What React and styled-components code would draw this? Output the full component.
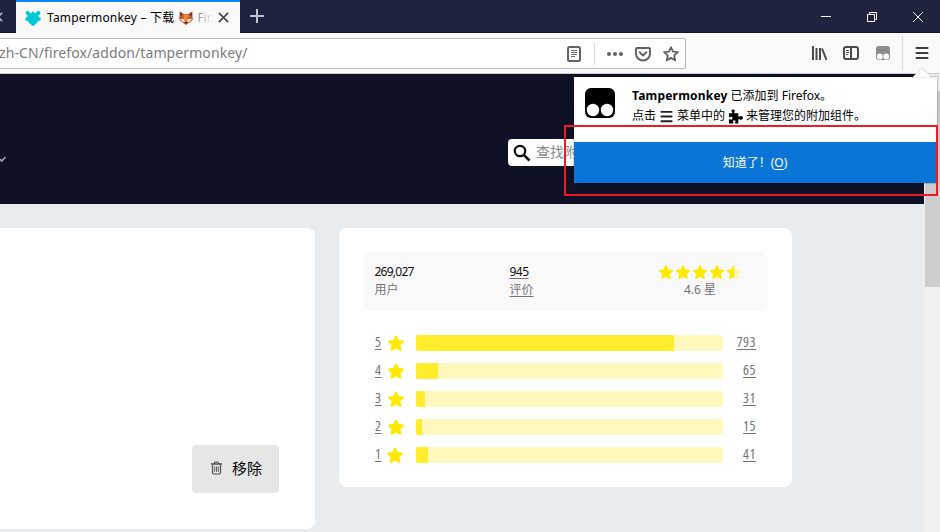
import React from "react";
import styled, { createGlobalStyle } from "styled-components";

const Global = createGlobalStyle`
  * { box-sizing: border-box; }
  html, body { margin: 0; padding: 0; overflow: hidden; }
  body { font-family: "Noto Sans", "Noto Sans CJK SC", sans-serif; font-size: 12px; color: #000; }
  svg { display: block; flex: none; }
`;

const Window = styled.div`
  position: relative;
  width: 940px;
  height: 532px;
  overflow: hidden;
  display: flex;
  flex-direction: column;
  background: #e8ecef;
`;

const Label = styled.span`
  font-size: ${(p) => p.$size || 12}px;
  line-height: 18px;
  font-weight: ${(p) => p.$weight || 400};
  letter-spacing: ${(p) => p.$track || 0}px;
  color: ${(p) => p.$color || "inherit"};
  white-space: nowrap;
`;

/* Title bar */
const TitleBar = styled.header`
  height: 33px;
  flex: none;
  display: flex;
  background: #202340;
  box-shadow: inset 0 -1px 0 #141629;
`;
const PreviousTab = styled.div`
  width: 16px;
  padding-top: 12px;
  overflow: hidden;
  svg { margin-left: -7px; }
`;
const Tab = styled.div`
  width: 224px;
  height: 33px;
  display: flex;
  align-items: center;
  background: #f9f9fa;
  border-top: 2px solid #0a84ff;
  padding: 0 11px 0 9px;
`;
const TabTitle = styled.div`
  display: flex;
  align-items: center;
  width: 165px;
  margin: 0 6px;
  overflow: hidden;
  white-space: nowrap;
  svg { margin: 0 4px 0 5px; }
`;
const Faded = styled(Label)`
  background: linear-gradient(90deg, #888, #e8e8e8 15px);
  -webkit-background-clip: text;
  background-clip: text;
  color: transparent;
`;
const NewTab = styled.div`
  padding: 9px 0 0 10px;
  flex: 1;
`;
const WindowButtons = styled.div`
  display: flex;
  svg { width: 46px; height: 32px; }
`;

/* Navigation toolbar */
const Toolbar = styled.nav`
  height: 41px;
  flex: none;
  display: flex;
  background: #f9f9fa;
  border-bottom: 1px solid #ccc;
`;
const UrlBar = styled.div`
  width: 687px;
  height: 31px;
  margin: 5px 0 0 -1px;
  display: flex;
  align-items: center;
  border: 1px solid #b9b9ba;
  border-radius: 0 2px 2px 0;
  background: #fff;
`;
const UrlText = styled(Label)`
  width: 567px;
  margin-left: -1px;
  color: #7b7b7b;
  line-height: 24px;
  padding-bottom: 2px;
`;
const UrlDivider = styled.i`
  width: 1px;
  height: 22px;
  margin: 0 12px;
  background: #d7d7db;
`;
const UrlActions = styled.div`
  display: flex;
  gap: 12px;
`;
const ToolIcons = styled.div`
  display: flex;
  gap: 16px;
  padding: 12px 11px 0 125px;
`;
const MenuButton = styled.div`
  height: 34px;
  margin-top: 3px;
  padding: 9px 0 0 11px;
  border-left: 1px solid #d7d7db;
`;

/* Page */
const Viewport = styled.div`
  display: flex;
  flex: 1;
`;
const Page = styled.main`
  width: 924px;
`;
const Hero = styled.section`
  height: 130px;
  display: flex;
  align-items: flex-start;
  background: #0f1126;
  padding-top: 65px;
`;
const HeroChevron = styled.div`
  width: 508px;
  padding-top: 17px;
`;
const Search = styled.div`
  width: 280px;
  height: 27px;
  display: flex;
  align-items: center;
  gap: 5px;
  padding-left: 5px;
  background: #fff;
  border-radius: 4px;
  span { margin-bottom: 2px; }
`;
const Cards = styled.div`
  display: flex;
  align-items: flex-start;
  gap: 24px;
  padding-top: 24px;
`;
const SummaryCard = styled.section`
  width: 315px;
  height: 301px;
  display: flex;
  align-items: flex-end;
  justify-content: flex-end;
  padding: 36px;
  background: #fff;
  border-radius: 0 8px 8px 0;
`;
const RemoveButton = styled.div`
  width: 87px;
  height: 48px;
  display: flex;
  align-items: center;
  padding: 0 0 2px 18px;
  gap: 9px;
  background: #e6e6e6;
  border-radius: 4px;
`;
const RatingCard = styled.section`
  width: 453px;
  height: 259px;
  padding: 24px;
  background: #fff;
  border-radius: 8px;
`;
const Stats = styled.div`
  height: 59px;
  display: grid;
  grid-template-columns: 135px 135px 111px;
  padding: 11px 11.5px;
  background: #f9f9fa;
  border-radius: 8px;
`;
const Stat = styled.div`
  display: flex;
  flex-direction: column;
  align-items: ${(p) => (p.$center ? "center" : "flex-start")};
  text-decoration: ${(p) => (p.$link ? "underline" : "none")};
  text-underline-offset: 2px;
  color: #737373;
`;
const Stars = styled.div`
  height: 18px;
  display: flex;
  align-items: center;
  gap: 3px;
`;
const Histogram = styled.div`
  display: flex;
  flex-direction: column;
  gap: 12px;
  padding: 24px 12px;
`;
const HistogramRow = styled.div`
  display: flex;
  align-items: center;
  height: 16px;
  color: #737373;
  text-decoration: underline;
  text-underline-offset: 2px;
`;
const Digits = styled.span`
  font-family: "Open Sans", "Noto Sans", sans-serif;
  font-size: 14px;
  font-stretch: 75%;
  line-height: 16px;
  letter-spacing: 0.5px;
  margin-bottom: 2px;
`;
const Score = styled.div`
  display: flex;
  align-items: center;
  gap: ${(p) => (p.$narrow ? 4 : 5)}px;
  width: 41px;
  span { width: 8px; }
`;
const Track = styled.div`
  width: 307px;
  height: 16px;
  background: #fff8bd;
  border-radius: 2px;
  overflow: hidden;
`;
const Fill = styled.div`
  height: 16px;
  background: #ffed2d;
`;
const Count = styled.div`
  display: flex;
  justify-content: flex-end;
  width: 33px;
`;
const Scrollbar = styled.aside`
  width: 16px;
  padding: 17px 0 0 1px;
  background: #f0f0f0;
`;
const Thumb = styled.div`
  height: 196px;
  background: #cdcdcd;
`;

/* Notification */
const Popup = styled.div`
  position: absolute;
  left: 574px;
  top: 77px;
  width: 363px;
  height: 106px;
  background: #fff;
  box-shadow: 0 0 1px 1px rgba(0, 0, 0, 0.16);
`;
const Arrow = styled.svg`
  position: absolute;
  left: 338px;
  top: -10px;
`;
const Notice = styled.div`
  height: 65px;
  display: flex;
  gap: 17px;
  padding: 10px 11px;
  > svg { margin-top: 1px; }
`;
const NoticeLines = styled.div`
  display: flex;
  flex-direction: column;
  gap: 2px;
`;
const NoticeLine = styled.div`
  height: 18px;
  display: flex;
  align-items: center;
  gap: 3px;
`;
const Confirm = styled.div`
  height: 41px;
  display: flex;
  align-items: center;
  justify-content: center;
  padding-right: 1px;
  background: #0a75d7;
  color: #fff;
  u { text-underline-offset: 2px; }
`;
const Highlight = styled.div`
  position: absolute;
  left: 564px;
  top: 125px;
  width: 374px;
  height: 71px;
  border: 2px solid #ed1c24;
`;

const STAR = "M8 .4c.5 0 .8.3 1 .8l1.700 3.900 4.300.4c1 .1 1.300 1.100.6 1.800l-3.200 2.900 1 4.300c.2 1-.7 1.700-1.600 1.200L8 13.500l-3.800 2.200c-.9.500-1.800-.2-1.600-1.200l1-4.300L.4 7.300c-.7-.7-.4-1.700.6-1.800l4.300-.4L7 1.200c.2-.5.5-.8 1-.8z";

function Star({ size = 16, half }) {
  return (
    <svg width={size} height={size} viewBox="0 0 16 16">
      <path d={STAR} fill={half ? "#fff5a3" : "#ffe900"} />
      {half && <path d={STAR} fill="#ffe900" style={{ clipPath: "inset(0 50% 0 0)" }} />}
    </svg>
  );
}

function Cross({ size, color, width }) {
  return (
    <svg width={size} height={size} viewBox="0 0 10 10">
      <path d="M.8.8l8.400 8.400M9.200.8L.8 9.200" stroke={color} strokeWidth={width} />
    </svg>
  );
}

const PUZZLE = "M4.500 4V3C3 1.600 3.800 0 5.500 0s2.500 1.600 1.200 3v1H11v3.500h1.300C13.800 6.200 16 7 16 8.900s-2.200 2.700-3.700 1.400H11V15H7.600v-1.200c1-1.200.3-2.300-.9-2.300s-1.900 1.100-.9 2.300V15H1v-4.500h1.300c1.500 1 2.400.1 2.400-1.100S3.800 7.300 2.300 8.300H1V4z";

function AddonsIcon() {
  return (
    <svg width="16" height="16" viewBox="0 0 16 16" fill="#00c8d7">
      <circle cx="2.600" cy="3" r="2" />
      <circle cx="13.400" cy="3" r="2" />
      <circle cx="1.800" cy="9" r="1.700" />
      <circle cx="14.200" cy="9" r="1.700" />
      <circle cx="8" cy="14" r="2" />
      <path d="M3 1.500l3 1.700C6.800 3.700 7 2.700 6.600 1.800h2.800C9 2.700 9.200 3.700 10 3.200l3-1.700.8 6 .4 3.300-1.200.4-1.400 2.300L8 14.500l-3.600-1L3 11.200l-1.200-.4.4-3.300z" />
    </svg>
  );
}

function Fox() {
  return (
    <svg width="14" height="14" viewBox="0 0 14 14">
      <path d="M.7.2l4 2.800h4.600L13.300.2l.2 5.500.3 3-3.300 2.800L7 14l-3.500-2.500L.2 8.700l.3-3z" fill="#c4552b" />
      <path d="M1.300 1.500l2.200 1.800-1.900 2.300zM12.700 1.500l-2.200 1.800 1.900 2.300z" fill="#493039" />
      <path d="M5 3.500h4l1.700 4.300L8 10H6L3.300 7.800z" fill="#f58435" />
      <path d="M1 8l3.600-.3L6.200 11 4 11zM13 8l-3.600-.3L7.800 11l2.200 0z" fill="#f4e9df" />
      <path d="M4 6.200l1.700 1-1.400.3zM10 6.200l-1.700 1 1.400.3zM5.800 11h2.400L7 13z" fill="#211d28" />
    </svg>
  );
}

function Burger({ size = 16, color = "#3e3e3f" }) {
  return (
    <svg width={size} height={size} viewBox="0 0 16 16">
      <path d="M2.500 3h11M2.500 8h11M2.500 13h11" stroke={color} strokeWidth="2" strokeLinecap="round" />
    </svg>
  );
}

function TamperIcon({ size, color }) {
  return (
    <svg width={size} height={size} viewBox="0 0 30 30">
      <rect width="30" height="30" rx="6" fill={color} />
      <circle cx="8" cy="22" r="6.200" fill="#fff" />
      <circle cx="22" cy="22" r="6.200" fill="#fff" />
    </svg>
  );
}

function ReaderIcon() {
  return (
    <svg width="16" height="16" viewBox="0 0 16 16" fill="none" stroke="#636364">
      <rect x="2" y="1" width="12" height="14" rx="1.500" strokeWidth="2" />
      <path d="M5 4.500h6M5 6.500h6M5 8.500h6M5 10.500h4" />
    </svg>
  );
}

function PocketIcon() {
  return (
    <svg width="16" height="16" viewBox="0 0 16 16" fill="none" stroke="#636364" strokeWidth="2" strokeLinecap="round" strokeLinejoin="round">
      <path d="M2 2h12a1 1 0 0 1 1 1v4.500a7 7 0 0 1-14 0V3a1 1 0 0 1 1-1z" />
      <path d="M4.700 6.300L8 9.400l3.300-3.100" />
    </svg>
  );
}

function TrashIcon() {
  return (
    <svg width="13" height="14" viewBox="0 0 13 14" fill="none" stroke="#4f4f50">
      <path d="M1 3h11" strokeWidth="1.500" />
      <path d="M4.500 3V2q0-1 1-1h2q1 0 1 1v1M2.500 4v7.500q0 1.500 1.500 1.500h5q1.500 0 1.500-1.500V4" strokeWidth="1.200" />
      <path d="M4.700 5.500v5.300M6.500 5.500v5.300M8.300 5.500v5.300" strokeWidth=".9" />
    </svg>
  );
}

const ROWS = [
  { score: 5, count: 793, fill: 258 },
  { score: 4, count: 65, fill: 22 },
  { score: 3, count: 31, fill: 9 },
  { score: 2, count: 15, fill: 6 },
  { score: 1, count: 41, fill: 12 },
];

export default function App() {
  return (
    <Window>
      <Global />
      <TitleBar>
        <PreviousTab><Cross size={10} color="#b5b6c0" width={1.6} /></PreviousTab>
        <Tab>
          <AddonsIcon />
          <TabTitle>
            <Label $track={0.2}>Tampermonkey – 下载</Label>
            <Fox />
            <Faded>Fir</Faded>
          </TabTitle>
          <Cross size={11} color="#4a4a4b" width={1.6} />
        </Tab>
        <NewTab>
          <svg width="14" height="14"><path d="M7 0v14M0 7h14" stroke="#c2c2cb" strokeWidth="2" /></svg>
        </NewTab>
        <WindowButtons>
          <svg viewBox="0 0 46 32"><path d="M19 16.500h10" stroke="#fff" /></svg>
          <svg viewBox="0 0 46 32" fill="none" stroke="#fff"><path d="M19.500 14.500h7v7h-7zM21.500 14v-1.500h7v7H27" /></svg>
          <svg viewBox="0 0 46 32"><path d="M19 12l10 10M29 12L19 22" stroke="#fff" /></svg>
        </WindowButtons>
      </TitleBar>

      <Toolbar>
        <UrlBar>
          <UrlText $size={14} $track={0.1}>zh-CN/firefox/addon/tampermonkey/</UrlText>
          <ReaderIcon />
          <UrlDivider />
          <UrlActions>
            <svg width="16" height="16" fill="#636364"><circle cx="2" cy="8" r="2" /><circle cx="8" cy="8" r="2" /><circle cx="14" cy="8" r="2" /></svg>
            <PocketIcon />
            <svg width="16" height="16" viewBox="0 0 16 16" fill="none" stroke="#636364" strokeWidth="1.800" strokeLinejoin="round">
              <path d="M8 1.200l2 4.500 4.900.5-3.700 3.300 1.100 4.900L8 11.900l-4.300 2.500 1.100-4.900L1.100 6.200 6 5.700z" />
            </svg>
          </UrlActions>
        </UrlBar>
        <ToolIcons>
          <svg width="16" height="16" fill="none" stroke="#4a4a4b" strokeWidth="2"><path d="M2 1v14M5.500 3v12M9 3v12M11 3.500L15.500 15" /></svg>
          <svg width="16" height="16" fill="none" stroke="#4a4a4b" strokeWidth="2"><rect x="1" y="2" width="14" height="12" rx="2" /><path d="M8 2v12" /><path d="M3 5.500h3M3 7.500h3M3 9.500h2" strokeWidth="1" /></svg>
          <svg width="16" height="16" viewBox="0 0 16 16"><rect x="1" y="1" width="14" height="14" rx="3" fill="#8c8c8d" /><circle cx="4.800" cy="11.500" r="2.900" fill="#fff" /><circle cx="11.200" cy="11.500" r="2.900" fill="#fff" /></svg>
        </ToolIcons>
        <MenuButton><Burger /></MenuButton>
      </Toolbar>

      <Viewport>
        <Page>
          <Hero>
            <HeroChevron>
              <svg width="8" height="8" fill="none" stroke="#a0a1aa" strokeWidth="1.700"><path d="M-2 1.500L1.800 5 5.500 1" /></svg>
            </HeroChevron>
            <Search>
              <svg width="18" height="18" fill="none" stroke="#0c0c0d" strokeWidth="2.200"><circle cx="7" cy="7" r="5.200" /><path d="M10.800 10.800L16.500 16.500" strokeWidth="2.600" /></svg>
              <Label $size={14} $color="#8a8a8b">查找附加组件</Label>
            </Search>
          </Hero>
          <Cards>
            <SummaryCard>
              <RemoveButton><TrashIcon /><Label $size={15}>移除</Label></RemoveButton>
            </SummaryCard>
            <RatingCard>
              <Stats>
                <Stat><Label $color="#0c0c0d" $track={-0.75}>269,027</Label><Label>用户</Label></Stat>
                <Stat $link><Label $color="#0c0c0d" $track={-0.5}>945</Label><Label>评价</Label></Stat>
                <Stat $center>
                  <Stars><Star size={14} /><Star size={14} /><Star size={14} /><Star size={14} /><Star size={14} half /></Stars>
                  <Label>4.6 星</Label>
                </Stat>
              </Stats>
              <Histogram>
                {ROWS.map((row) => (
                  <HistogramRow key={row.score}>
                    <Score $narrow={row.score === 1}><Digits>{row.score}</Digits><Star /></Score>
                    <Track><Fill style={{ width: row.fill }} /></Track>
                    <Count><Digits>{row.count}</Digits></Count>
                  </HistogramRow>
                ))}
              </Histogram>
            </RatingCard>
          </Cards>
        </Page>
        <Scrollbar><Thumb /></Scrollbar>
      </Viewport>

      <Popup>
        <Arrow width="20" height="11"><path d="M0 11L10 .5 20 11z" fill="#fff" stroke="#c8c8c8" strokeWidth=".7" /></Arrow>
        <Notice>
          <TamperIcon size={30} color="#000" />
          <NoticeLines>
            <NoticeLine><Label $weight={700} $track={0.2}>Tampermonkey</Label><Label>已添加到 Firefox。</Label></NoticeLine>
            <NoticeLine>
              <Label>点击</Label><Burger size={15} color="#222" /><Label>菜单中的</Label>
              <svg width="15" height="15" viewBox="0 0 16 15"><path d={PUZZLE} /></svg>
              <Label>来管理您的附加组件。</Label>
            </NoticeLine>
          </NoticeLines>
        </Notice>
        <Confirm><Label lang="zh-CN">{"知道了\uff01"}(<u>O</u>)</Label></Confirm>
      </Popup>
      <Highlight />
    </Window>
  );
}
